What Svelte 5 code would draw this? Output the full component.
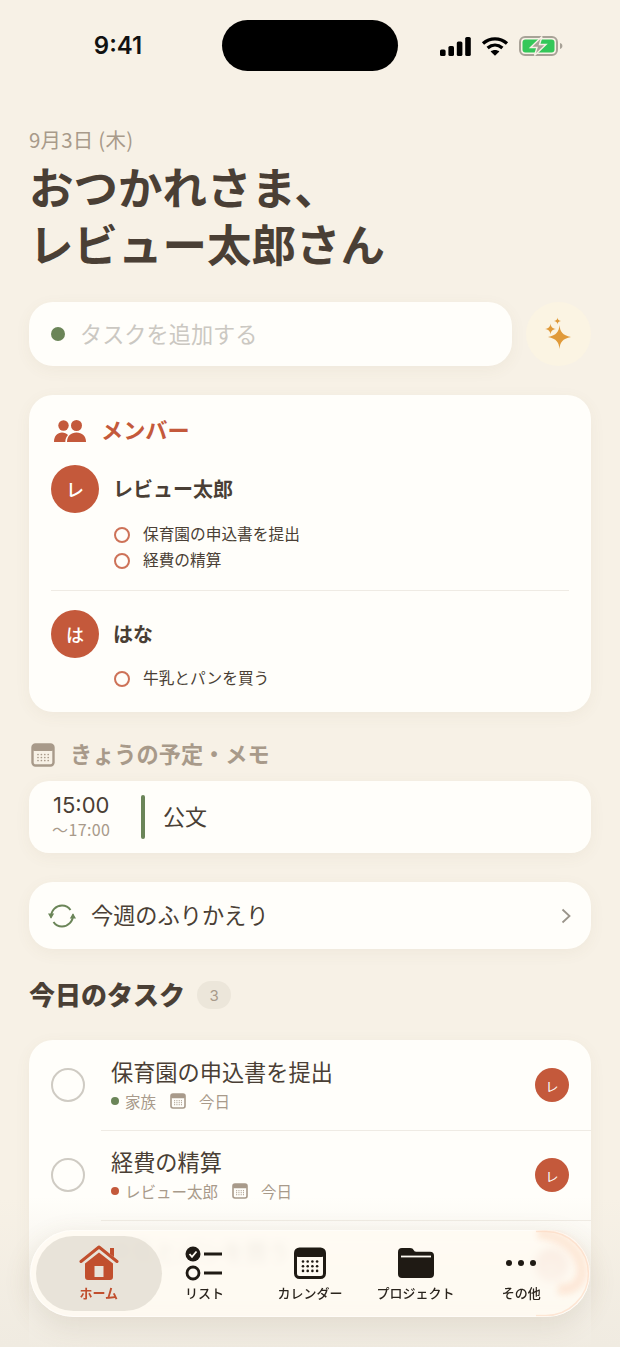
<script>
	const members = [
		{ initial: 'レ', name: 'レビュー太郎', tasks: ['保育園の申込書を提出', '経費の精算'] },
		{ initial: 'は', name: 'はな', tasks: ['牛乳とパンを買う'] }
	];
	const tasks = [
		{ title: '保育園の申込書を提出', tag: '家族', color: '#6b8558' },
		{ title: '経費の精算', tag: 'レビュー太郎', color: '#c4593b' },
		{ title: '牛乳とパンを買う' }
	];
	const calDots = [0, 1, 2, 3].flatMap((x) => [0, 1, 2].map((y) => [7 + x * 3.4, 11.5 + y * 3]));
</script>

{#snippet calendar(cls)}
	<svg class={cls} viewBox="0 0 24 24" aria-hidden="true">
		<rect x="1.5" y="1.5" width="21" height="21" rx="3" fill="none" stroke="currentColor" stroke-width="2.4" />
		<rect x="1.5" y="1.5" width="21" height="6.5" rx="2" fill="currentColor" />
		{#each calDots as [x, y]}
			<circle cx={x} cy={y} r="0.85" fill="currentColor" />
		{/each}
	</svg>
{/snippet}

<div class="page">
	<header class="status">
		<span class="clock">9:41</span>
		<i class="island"></i>
		<div class="status-icons">
			<svg width="31" height="19" viewBox="0 0 31 19" fill="#000" aria-hidden="true">
				<rect x="0" y="12.5" width="5.6" height="6.5" rx="1.6" />
				<rect x="8.4" y="9" width="5.6" height="10" rx="1.6" />
				<rect x="16.8" y="4.5" width="5.6" height="14.5" rx="1.6" />
				<rect x="25.2" y="0" width="5.6" height="19" rx="1.6" />
			</svg>
			<svg width="28" height="19" viewBox="0 0 28 19" aria-hidden="true">
				<path d="M2 6.6C9 .4 19 .4 26 6.6M6.6 11c4.5-3.8 10.3-3.8 14.8 0" fill="none" stroke="#000" stroke-width="3.3" />
				<path d="M14 18.8 9.6 14.6c2.6-2 6.2-2 8.8 0z" fill="#000" />
			</svg>
			<svg width="45" height="20" viewBox="0 0 45 20" aria-hidden="true">
				<rect x="1" y="1" width="37" height="18" rx="5" fill="none" stroke="#a8a297" stroke-width="2" />
				<rect x="3.5" y="3.5" width="32" height="13" rx="3" fill="#34c759" />
				<path d="M41 7v6c1.6-.4 2.4-1.6 2.4-3S42.600 7.400 41 7z" fill="#a8a297" />
				<path d="M23 .5 11.500 11.500h6.500L15.500 19.500 27 8.500h-6.500z" fill="#a8a297" stroke="#f7f1e6" stroke-width="1.400" />
			</svg>
		</div>
	</header>

	<main class="content">
		<p class="date">9月3日 (木)</p>
		<h1>おつかれさま、<br />レビュー太郎さん</h1>

		<div class="add-row">
			<div class="add-input">
				<i class="add-dot"></i>
				<span>タスクを追加する</span>
			</div>
			<div class="spark">
				<svg width="40" height="40" viewBox="0 0 40 40" fill="#e09a3a" aria-hidden="true">
					<path d="M20.500 11c.6 6.500 2.800 10.300 11.500 12-8.700 1.700-10.900 5.500-11.500 12-.6-6.500-2.800-10.300-11.500-12 8.700-1.700 10.900-5.500 11.500-12z" />
					<path d="M11.500 9.500c.3 3 1.300 4.800 5.500 5.500-4.200.7-5.200 2.500-5.500 5.500-.3-3-1.300-4.800-5.500-5.500 4.200-.7 5.200-2.500 5.500-5.500z" />
					<path d="M18.500 3.500c.2 2 .8 3 3.500 3.500-2.700.5-3.300 1.500-3.500 3.500-.2-2-.8-3-3.500-3.500 2.700-.5 3.300-1.500 3.500-3.500z" />
				</svg>
			</div>
		</div>

		<section class="card members">
			<h2 class="members-title">
				<svg width="32" height="22" viewBox="0 0 32 22" fill="#c4593b" aria-hidden="true">
					<circle cx="9.500" cy="5.500" r="5.200" />
					<circle cx="22.500" cy="5.500" r="5.500" />
					<path d="M0 22c0-6 3.500-9.500 8-9.500 2.500 0 4.600.9 6 2.600-1.700 1.800-2.600 4-2.700 6.900z" />
					<path d="M13 22c0-6 4-9.500 9.500-9.500S32 16 32 22z" />
				</svg>
				<span>メンバー</span>
			</h2>
			{#each members as member, i}
				{#if i > 0}<hr />{/if}
				<div class="person">
					<span class="avatar">{member.initial}</span>
					<strong>{member.name}</strong>
				</div>
				<ul>
					{#each member.tasks as task}
						<li><i></i><span>{task}</span></li>
					{/each}
				</ul>
			{/each}
		</section>

		<h2 class="agenda-title">
			{@render calendar('agenda-cal')}
			<span>きょうの予定・メモ</span>
		</h2>
		<div class="card event">
			<div class="event-time">
				<span>15:00</span>
				<small>～17:00</small>
			</div>
			<i class="event-bar"></i>
			<span class="event-name">公文</span>
		</div>

		<div class="card review">
			<svg width="28" height="28" viewBox="0 0 28 28" fill="none" stroke="#6b8558" stroke-width="2" aria-hidden="true">
				<path d="M3 15.500C2.800 8.500 8 3.500 14 3.500c3.500 0 6.500 1.500 8.500 4.500" />
				<path d="M25 12.500c.2 7-5 12-11 12-3.500 0-6.500-1.500-8.500-4.500" />
				<path d="M0 11.500h6.200L3 16.800zM28 16.500h-6.200L25 11.200z" fill="#6b8558" stroke="none" />
			</svg>
			<span class="review-label">今週のふりかえり</span>
			<svg class="chev" width="10" height="16" viewBox="0 0 10 16" fill="none" stroke="#9a948a" stroke-width="1.800" aria-hidden="true">
				<path d="m1.500 1.500 7 6.500-7 6.500" />
			</svg>
		</div>

		<h2 class="tasks-title"><b>今日のタスク</b> <span>3</span></h2>

		<section class="card tasks">
			{#each tasks as task}
				<div class="task">
					<i class="check"></i>
					<div class="task-body">
						<div class="task-title">{task.title}</div>
						<div class="task-meta">
							{#if task.tag}
								<i style:background={task.color}></i>
								<span>{task.tag}</span>
								{@render calendar('meta-cal')}
								<span class="meta-day">今日</span>
							{/if}
						</div>
					</div>
					<span class="avatar small">レ</span>
				</div>
			{/each}
		</section>
	</main>

	<div class="fade"></div>

	<nav class="tabbar">
		<svg class="sheen" width="560" height="87" viewBox="0 0 560 87" fill="none" aria-hidden="true">
			<defs>
				<filter id="soft" x="-30%" y="-30%" width="160%" height="160%"><feGaussianBlur stdDeviation="3" /></filter>
			</defs>
			<path d="M506 1.500h10c23 0 42.500 19 42.500 42s-19.500 42-42.500 42h-10" stroke="#fbd9c2" stroke-width="1.500" opacity=".6" />
			<path d="M508 3c24 3 42 16 44 36 1 14-10 22-24 20" stroke="#fbd3b8" stroke-width="11" opacity=".45" filter="url(#soft)" />
		</svg>
		<a class="tab active" href="#home">
			<svg width="40" height="36" viewBox="0 0 40 36" aria-hidden="true">
				<path d="M2 16.500 20 2l18 14.500" fill="none" stroke="#c14f2e" stroke-width="3" stroke-linecap="round" stroke-linejoin="round" />
				<path d="M31 3h4v9l-4-3z" fill="#c14f2e" />
				<path fill-rule="evenodd" d="M20 7.500 34 18.500V32a3 3 0 0 1-3 3H9a3 3 0 0 1-3-3V18.500zM15.500 21v11h9V21z" fill="#c14f2e" />
			</svg>
			<span>ホーム</span>
		</a>
		<a class="tab" href="#list">
			<svg width="38" height="36" viewBox="0 0 38 36" aria-hidden="true">
				<circle cx="8" cy="9" r="7.500" fill="#1f1a14" />
				<path d="m4.500 9 2.500 2.800 4.500-5.300" fill="none" stroke="#fffbf2" stroke-width="1.800" />
				<circle cx="8" cy="28" r="6" fill="none" stroke="#1f1a14" stroke-width="2.800" />
				<path d="M19 9h18M19 28h18" stroke="#1f1a14" stroke-width="3" />
			</svg>
			<span>リスト</span>
		</a>
		<a class="tab" href="#calendar">
			<svg width="32" height="36" viewBox="0 0 32 36" aria-hidden="true">
				<rect x="1.500" y="4" width="29" height="28.500" rx="4" fill="none" stroke="#1f1a14" stroke-width="3" />
				<rect x="1.500" y="4" width="29" height="8" rx="3" fill="#1f1a14" />
				{#each [0, 1, 2, 3] as x}
					{#each [0, 1, 2] as y}
						<circle cx={9 + x * 4.700} cy={16.500 + y * 4.700} r="1.300" fill="#1f1a14" />
					{/each}
				{/each}
			</svg>
			<span>カレンダー</span>
		</a>
		<a class="tab" href="#projects">
			<svg width="36" height="36" viewBox="0 0 36 36" aria-hidden="true">
				<path d="M0 7a4 4 0 0 1 4-4h8c2 0 3 .8 4 2.500.5.800 1 1.200 2 1.200h14a4 4 0 0 1 4 4V29a4 4 0 0 1-4 4H4a4 4 0 0 1-4-4z" fill="#1f1a14" />
				<path d="M3 11.500h30" stroke="#fffbf2" stroke-width="1.800" />
			</svg>
			<span>プロジェクト</span>
		</a>
		<a class="tab" href="#more">
			<svg width="32" height="36" viewBox="0 0 32 36" fill="#1f1a14" aria-hidden="true">
				<circle cx="4" cy="18" r="3" />
				<circle cx="16" cy="18" r="3" />
				<circle cx="28" cy="18" r="3" />
			</svg>
			<span>その他</span>
		</a>
	</nav>
</div>

<style>
	:global(body) { margin: 0; }
	.page {
		position: relative;
		width: 620px;
		height: 1347px;
		overflow: hidden;
		background: #f7f1e6;
		color: #4a3f35;
		font-family: 'Noto Sans CJK JP', 'Noto Sans', sans-serif;
	}
	h1, h2, p, ul { margin: 0; padding: 0; }
	i { display: block; }

	.status { display: grid; grid-template-columns: 222px 176px 222px; padding-top: 20px; align-items: center; }
	.clock { padding-left: 14px; text-align: center; font: 600 24px 'Inter', sans-serif; color: #111; }
	.island { height: 51px; border-radius: 26px; background: #000; }
	.status-icons { display: flex; justify-content: center; align-items: center; gap: 10px; padding: 1px 14px 0 0; }

	.content { padding: 54px 29px 0; }
	.date { font-size: 20.5px; line-height: 28px; letter-spacing: .2px; color: #a89a8a; }
	h1 { margin-top: 4px; font-size: 44.5px; line-height: 57px; font-weight: 700; letter-spacing: 0; }

	.add-row { display: flex; gap: 14px; margin-top: 31px; }
	.add-input {
		flex: 1;
		height: 64px;
		display: flex;
		align-items: center;
		gap: 15px;
		padding-left: 22px;
		border-radius: 24px;
		background: #fffefa;
		box-shadow: 0 4px 16px rgba(120, 95, 60, .06);
		font-size: 22.2px;
		color: #cbc8c2;
	}
	.add-input span { padding-bottom: 3px; }
	.add-dot { width: 14px; height: 14px; border-radius: 50%; background: #6b8558; }
	.spark { width: 65px; height: 64px; border-radius: 50%; background: #fbf4e3; display: grid; place-items: center; }

	.card { background: #fffefa; box-shadow: 0 4px 16px rgba(120, 95, 60, .06); }
	.members { margin-top: 29px; padding: 22px 22px 20px; border-radius: 24px; }
	.members-title { display: flex; align-items: center; gap: 15px; padding-left: 3px; font-size: 22.2px; line-height: 28px; font-weight: 700; color: #c4593b; }
	.members-title span { line-height: 24px; padding-bottom: 4px; }
	.person { display: flex; align-items: center; gap: 14px; font-size: 20px; }
	.members-title + .person { margin-top: 20px; }
	.person strong { font-weight: 700; padding-bottom: 2px; }
	.avatar {
		flex: none;
		width: 48px;
		height: 48px;
		display: grid;
		place-items: center;
		border-radius: 50%;
		background: #c4593b;
		color: #fff;
		font-size: 18px;
		font-weight: 500;
	}
	.avatar.small { width: 34px; height: 34px; font-size: 13px; font-weight: 400; }
	ul { list-style: none; margin-top: 9px; padding-left: 63px; font-size: 15.7px; line-height: 26px; }
	li { display: flex; align-items: center; gap: 13px; }
	li span { line-height: 23px; padding-bottom: 3px; }
	li i { width: 16px; height: 16px; box-sizing: border-box; border: 2px solid #c4593b; border-radius: 50%; opacity: .85; }
	hr { margin: 16px 0 19px; border: 0; border-top: 1px solid #efebe4; }
	hr + .person + ul { margin-top: 8px; }

	.agenda-title { display: flex; align-items: center; gap: 15px; margin-top: 29px; padding-left: 2px; font-size: 22.2px; line-height: 28px; font-weight: 700; color: #a89a8a; }
	.agenda-title span { line-height: 24px; padding-bottom: 4px; }
	:global(.agenda-cal) { width: 24px; height: 24px; }
	.event { display: flex; align-items: center; height: 72px; margin-top: 12px; padding-left: 23px; border-radius: 20px; }
	.event-time { width: 89px; display: flex; flex-direction: column; align-items: flex-start; }
	.event-time span { padding-left: 1px; font: 400 22px/27px 'Inter', sans-serif; color: #4a3f35; }
	.event-time small { font-size: 16px; line-height: 20px; letter-spacing: .4px; padding-bottom: 3px; color: #a89a8a; }
	.event-bar { width: 4px; height: 44px; border-radius: 2px; background: #6b8558; }
	.event-name { margin-left: 18px; padding-bottom: 4px; font-size: 22px; }

	.review { display: flex; align-items: center; height: 67px; margin-top: 29px; padding: 0 20px 0 19px; gap: 15px; border-radius: 24px; font-size: 22.2px; }
	.review-label { padding-bottom: 4px; }
	.chev { margin-left: auto; }

	.tasks-title { display: flex; align-items: center; gap: 12px; margin-top: 28px; font-size: 26px; line-height: 36px; font-weight: 700; }
	.tasks-title b { line-height: 34px; padding-bottom: 2px; }
	.tasks-title span {
		width: 34px;
		height: 28px;
		display: grid;
		place-items: center;
		border-radius: 14px;
		background: #ece6da;
		font: 400 15px 'Inter', sans-serif;
		color: #a89a8a;
	}

	.tasks { margin-top: 27px; border-radius: 24px; padding-bottom: 100px; }
	.task { position: relative; display: flex; align-items: center; height: 90px; padding: 0 22px; }
	.task + .task::before { content: ''; position: absolute; top: 0; left: 72px; right: 0; border-top: 1px solid #efebe4; }
	.check { flex: none; width: 34px; height: 34px; box-sizing: border-box; border: 2px solid #cfcbc3; border-radius: 50%; }
	.task-body { flex: 1; margin-left: 26px; padding-bottom: 1px; }
	.task-title { margin-top: -2px; font-size: 22.2px; line-height: 32px; }
	.task-meta { display: flex; align-items: center; gap: 6px; min-height: 22px; margin-top: 3px; font-size: 15.5px; line-height: 22px; color: #a89a8a; }
	.task-meta i { width: 8px; height: 8px; border-radius: 50%; }
	:global(.meta-cal) { width: 16px; height: 16px; margin-left: 8px; }
	.meta-day { margin-left: 7px; }

	.fade {
		position: absolute;
		left: 0;
		right: 0;
		bottom: 0;
		height: 150px;
		background: linear-gradient(to bottom, rgba(240, 235, 225, 0), rgba(240, 235, 225, .65) 60%, #f0ebe1);
	}
	.tabbar {
		position: absolute;
		left: 30px;
		top: 1230px;
		width: 560px;
		height: 87px;
		box-sizing: border-box;
		display: flex;
		padding: 0 16px;
		border-radius: 44px;
		background: rgba(255, 251, 242, .88);
		backdrop-filter: blur(4px);
		box-shadow: 0 8px 28px rgba(110, 90, 60, .14), inset 0 0 0 1px rgba(255, 255, 255, .5);
	}
	.sheen { position: absolute; left: 0; top: 0; pointer-events: none; }
	.tab {
		position: relative;
		flex: 1;
		display: flex;
		flex-direction: column;
		align-items: center;
		padding-top: 15px;
		text-decoration: none;
		color: #2a241d;
		font-size: 13px;
		line-height: 18px;
		font-weight: 500;
		white-space: nowrap;
	}
	.tab svg { height: 36px; margin-bottom: 3px; position: relative; }
	.tab span { position: relative; }
	.tab.active { color: #c14f2e; font-weight: 700; }
	.tab.active::before { content: ''; position: absolute; left: -10px; right: -10px; top: 6px; bottom: 6px; border-radius: 38px; background: rgba(226, 221, 210, .8); }
</style>
